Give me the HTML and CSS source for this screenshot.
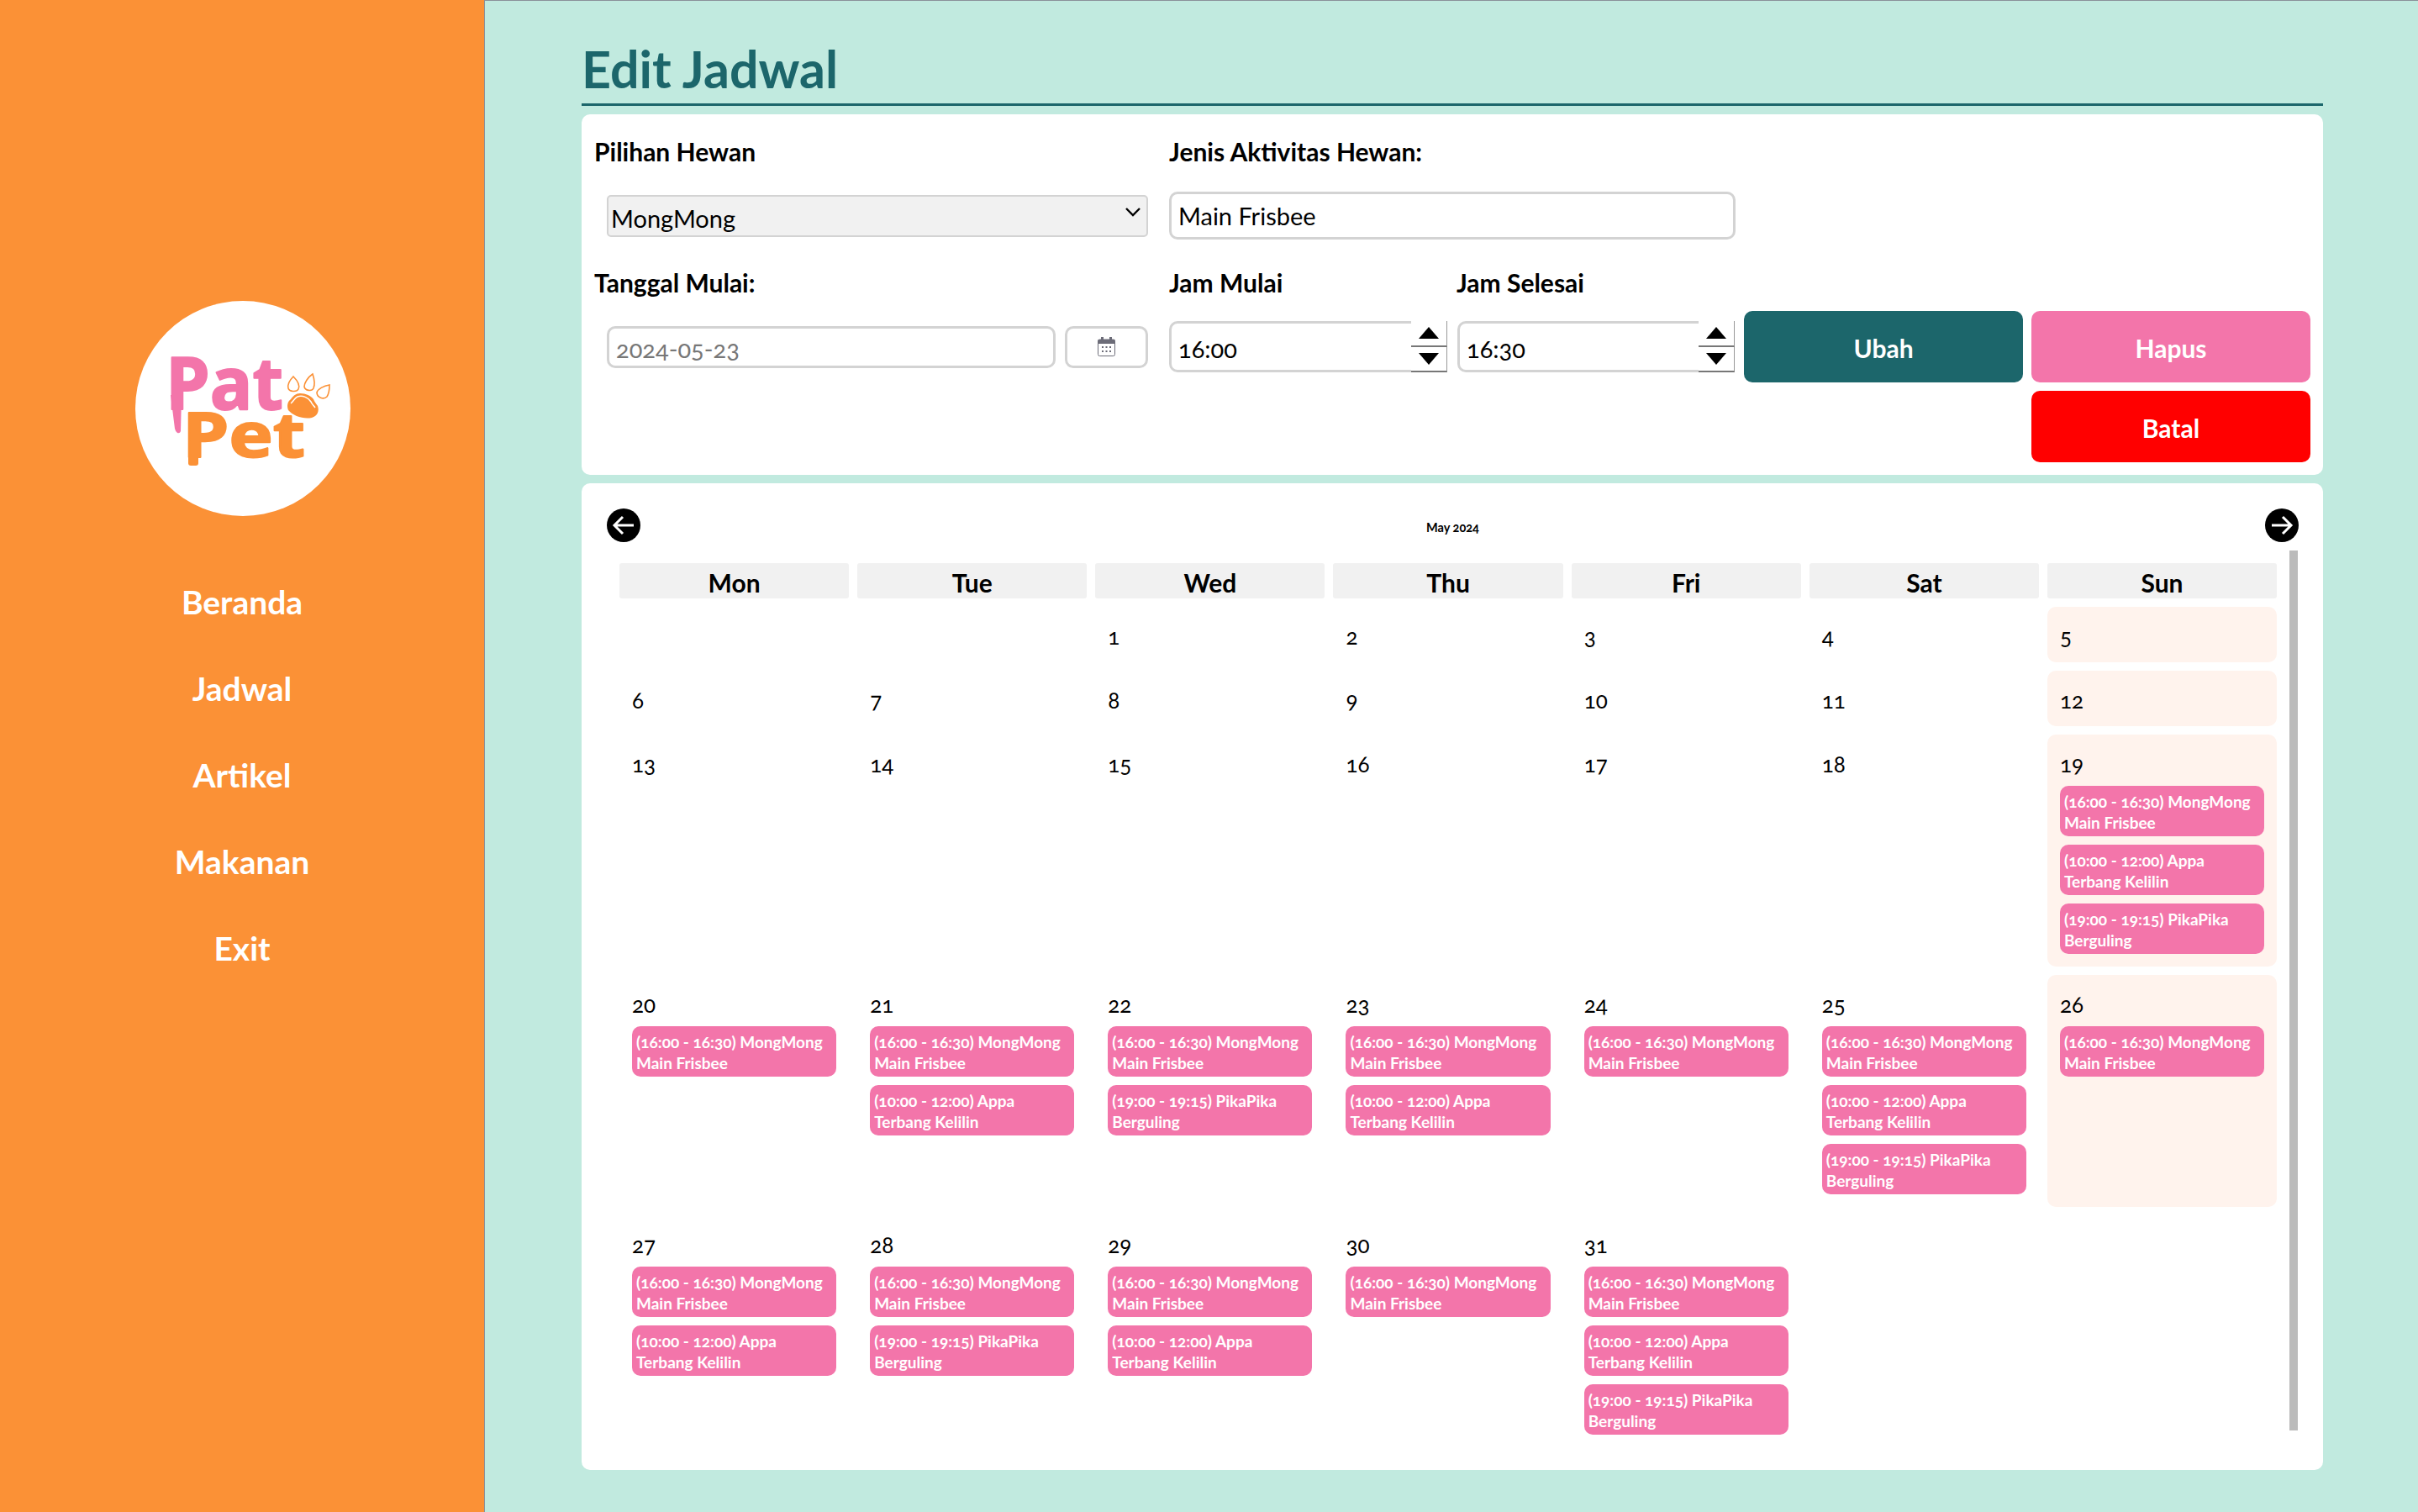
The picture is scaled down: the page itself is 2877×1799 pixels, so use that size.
FILE: index.html
```html
<!DOCTYPE html>
<html lang="en">
<head>
    <meta charset="UTF-8">
    <title>Edit Jadwal</title>
    <link rel="stylesheet" href="styles.css">
</head>
<body>
    <div class="layout">
        <aside class="sidebar">
            <svg class="logo" viewBox="0 0 256 256">
                <circle cx="128" cy="128" r="128" fill="#fff"/>
                <path d="M42 112h13l-1 43q-1 3-4 2-2-1-3-5z" fill="#f375aa"/>
                <text class="logo-text logo-pat" x="36" y="129" textLength="140" lengthAdjust="spacingAndGlyphs">Pat</text>
                <rect x="63" y="170" width="12" height="26" rx="3" fill="#fb9136"/>
                <text class="logo-text logo-pet" x="56" y="186" textLength="146" lengthAdjust="spacingAndGlyphs">Pet</text>
                <g fill="#fff" stroke="#fb9136" stroke-width="1.6">
                    <path d="M188 90c-5 5-7 10-6 14 1 4 10 5 12 1 2-4-1-10-6-15z"/>
                    <path d="M211 87c-6 4-10 11-10 15 1 5 9 6 11 2 2-5 1-11-1-17z"/>
                    <path d="M231 100c-7 1-14 5-15 9 0 6 8 9 12 5 2-3 3-9 3-14z"/>
                </g>
                <path fill="#fb9136" d="M196 110c-5 0-8 3-11 7-4 3-5 8-3 13 6 7 18 11 28 9 7-2 9-8 7-14-2-3-4-5-5-8-3-4-9-7-16-7z"/>
                <path fill="none" stroke="#fff" stroke-width="1.5" d="M185 122c3-2 4-6 8-8 6-2 13 1 16 6 1 3 3 4 5 7"/>
            </svg>
            <nav class="menu">
                <a href="#">Beranda</a>
                <a href="#">Jadwal</a>
                <a href="#">Artikel</a>
                <a href="#">Makanan</a>
                <a href="#">Exit</a>
            </nav>
        </aside>

        <main class="content">
            <h1 class="page-title">Edit Jadwal</h1>

            <form class="card form-card">
                <label class="field-label label-top">Pilihan Hewan</label>
                <label class="field-label label-top">Jenis Aktivitas Hewan:</label>
                <span></span><span></span>

                <div class="field-indent select-wrap">
                    <select class="pet-select">
                        <option>MongMong</option>
                    </select>
                    <svg class="select-arrow" width="20" height="12" viewBox="0 0 20 12">
                        <path d="M2 2l8 8 8-8" fill="none" stroke="#000" stroke-width="2.4"/>
                    </svg>
                </div>
                <input class="text-input activity-input" type="text" value="Main Frisbee">
                <span></span><span></span>

                <label class="field-label label-low">Tanggal Mulai:</label>
                <div class="time-labels">
                    <label class="field-label">Jam Mulai</label>
                    <label class="field-label">Jam Selesai</label>
                </div>
                <span></span><span></span>

                <div class="field-indent date-group">
                    <input class="text-input date-input" type="text" value="2024-05-23" disabled>
                    <button class="date-btn" type="button">
                        <svg width="21" height="23" viewBox="0 0 21 23">
                            <rect x="4" y="0" width="3" height="5" fill="#6c6c78"/>
                            <rect x="14" y="0" width="3" height="5" fill="#6c6c78"/>
                            <rect x="0.5" y="3" width="20" height="19.5" rx="2" fill="#fff" stroke="#6c6c78"/>
                            <rect x="0.5" y="3" width="20" height="5" fill="#6c6c78"/>
                            <g fill="#6c6c78">
                                <rect x="5" y="11" width="2" height="2"/><rect x="9.5" y="11" width="2" height="2"/><rect x="14" y="11" width="2" height="2"/>
                                <rect x="5" y="16" width="2" height="2"/><rect x="9.5" y="16" width="2" height="2"/><rect x="14" y="16" width="2" height="2"/>
                            </g>
                        </svg>
                    </button>
                </div>
                <div class="time-group">
                    <div class="time-box">
                        <input class="time-input" type="text" value="16:00">
                        <div class="spinner">
                            <button type="button" class="spin-btn"><span class="tri-up"></span></button>
                            <button type="button" class="spin-btn"><span class="tri-down"></span></button>
                        </div>
                    </div>
                    <div class="time-box">
                        <input class="time-input" type="text" value="16:30">
                        <div class="spinner">
                            <button type="button" class="spin-btn"><span class="tri-up"></span></button>
                            <button type="button" class="spin-btn"><span class="tri-down"></span></button>
                        </div>
                    </div>
                </div>
                <button class="action-btn btn-ubah" type="button">Ubah</button>
                <button class="action-btn btn-hapus" type="button">Hapus</button>

                <span></span><span></span><span></span>
                <button class="action-btn btn-batal" type="button">Batal</button>
            </form>

            <section class="card calendar-card">
                <div class="cal-nav">
                    <button class="cal-arrow" type="button">
                        <svg width="40" height="40" viewBox="0 0 40 40">
                            <circle cx="20" cy="20" r="20" fill="#000"/>
                            <path d="M32 20H9M19 10L9 20l10 10" fill="none" stroke="#fff" stroke-width="3"/>
                        </svg>
                    </button>
                    <div class="cal-title">May 2024</div>
                    <button class="cal-arrow" type="button">
                        <svg width="40" height="40" viewBox="0 0 40 40">
                            <circle cx="20" cy="20" r="20" fill="#000"/>
                            <path d="M8 20h23M21 10l10 10-10 10" fill="none" stroke="#fff" stroke-width="3"/>
                        </svg>
                    </button>
                </div>

                <div class="cal-scrollbar"></div>

                <div class="cal-grid">
                    <div class="cal-head">Mon</div>
                    <div class="cal-head">Tue</div>
                    <div class="cal-head">Wed</div>
                    <div class="cal-head">Thu</div>
                    <div class="cal-head">Fri</div>
                    <div class="cal-head">Sat</div>
                    <div class="cal-head">Sun</div>

                    <div class="day"></div>
                    <div class="day"></div>
                    <div class="day"><div class="day-num">1</div></div>
                    <div class="day"><div class="day-num">2</div></div>
                    <div class="day"><div class="day-num">3</div></div>
                    <div class="day"><div class="day-num">4</div></div>
                    <div class="day sunday"><div class="day-num">5</div></div>

                    <div class="day"><div class="day-num">6</div></div>
                    <div class="day"><div class="day-num">7</div></div>
                    <div class="day"><div class="day-num">8</div></div>
                    <div class="day"><div class="day-num">9</div></div>
                    <div class="day"><div class="day-num">10</div></div>
                    <div class="day"><div class="day-num">11</div></div>
                    <div class="day sunday"><div class="day-num">12</div></div>

                    <div class="day"><div class="day-num">13</div></div>
                    <div class="day"><div class="day-num">14</div></div>
                    <div class="day"><div class="day-num">15</div></div>
                    <div class="day"><div class="day-num">16</div></div>
                    <div class="day"><div class="day-num">17</div></div>
                    <div class="day"><div class="day-num">18</div></div>
                    <div class="day sunday">
                        <div class="day-num">19</div>
                        <div class="event">(16:00 - 16:30) MongMong<br>Main Frisbee</div>
                        <div class="event">(10:00 - 12:00) Appa<br>Terbang Kelilin</div>
                        <div class="event">(19:00 - 19:15) PikaPika<br>Berguling</div>
                    </div>

                    <div class="day">
                        <div class="day-num">20</div>
                        <div class="event">(16:00 - 16:30) MongMong<br>Main Frisbee</div>
                    </div>
                    <div class="day">
                        <div class="day-num">21</div>
                        <div class="event">(16:00 - 16:30) MongMong<br>Main Frisbee</div>
                        <div class="event">(10:00 - 12:00) Appa<br>Terbang Kelilin</div>
                    </div>
                    <div class="day">
                        <div class="day-num">22</div>
                        <div class="event">(16:00 - 16:30) MongMong<br>Main Frisbee</div>
                        <div class="event">(19:00 - 19:15) PikaPika<br>Berguling</div>
                    </div>
                    <div class="day">
                        <div class="day-num">23</div>
                        <div class="event">(16:00 - 16:30) MongMong<br>Main Frisbee</div>
                        <div class="event">(10:00 - 12:00) Appa<br>Terbang Kelilin</div>
                    </div>
                    <div class="day">
                        <div class="day-num">24</div>
                        <div class="event">(16:00 - 16:30) MongMong<br>Main Frisbee</div>
                    </div>
                    <div class="day">
                        <div class="day-num">25</div>
                        <div class="event">(16:00 - 16:30) MongMong<br>Main Frisbee</div>
                        <div class="event">(10:00 - 12:00) Appa<br>Terbang Kelilin</div>
                        <div class="event">(19:00 - 19:15) PikaPika<br>Berguling</div>
                    </div>
                    <div class="day sunday">
                        <div class="day-num">26</div>
                        <div class="event">(16:00 - 16:30) MongMong<br>Main Frisbee</div>
                    </div>

                    <div class="day">
                        <div class="day-num">27</div>
                        <div class="event">(16:00 - 16:30) MongMong<br>Main Frisbee</div>
                        <div class="event">(10:00 - 12:00) Appa<br>Terbang Kelilin</div>
                    </div>
                    <div class="day">
                        <div class="day-num">28</div>
                        <div class="event">(16:00 - 16:30) MongMong<br>Main Frisbee</div>
                        <div class="event">(19:00 - 19:15) PikaPika<br>Berguling</div>
                    </div>
                    <div class="day">
                        <div class="day-num">29</div>
                        <div class="event">(16:00 - 16:30) MongMong<br>Main Frisbee</div>
                        <div class="event">(10:00 - 12:00) Appa<br>Terbang Kelilin</div>
                    </div>
                    <div class="day">
                        <div class="day-num">30</div>
                        <div class="event">(16:00 - 16:30) MongMong<br>Main Frisbee</div>
                    </div>
                    <div class="day">
                        <div class="day-num">31</div>
                        <div class="event">(16:00 - 16:30) MongMong<br>Main Frisbee</div>
                        <div class="event">(10:00 - 12:00) Appa<br>Terbang Kelilin</div>
                        <div class="event">(19:00 - 19:15) PikaPika<br>Berguling</div>
                    </div>
                    <div class="day"></div>
                    <div class="day"></div>
                </div>
            </section>
        </main>
    </div>
</body>
</html>
```

FILE: styles.css
```css
* {
    box-sizing: border-box;
}

body {
    margin: 0;
    font-family: Lato, "Open Sans", sans-serif;
    font-variant-numeric: oldstyle-nums;
    color: #000;
    background-color: #c1eadf;
}

.layout {
    display: flex;
    height: 1799px;
    overflow: hidden;
}

/* sidebar */
.sidebar {
    width: 577px;
    flex-shrink: 0;
    padding-top: 358px;
    background-color: #fb9136;
    border-right: 1px solid #8a9099;
}

.logo {
    display: block;
    width: 256px;
    height: 256px;
    margin: 0 0 0 161px;
}

.logo-text {
    font-family: "Open Sans", sans-serif;
    font-weight: 700;
    stroke-linejoin: round;
    stroke-width: 2px;
}

.logo-pat {
    font-size: 86px;
    fill: #f375aa;
    stroke: #f375aa;
}

.logo-pet {
    font-size: 74px;
    fill: #fb9136;
    stroke: #fb9136;
}

.menu {
    margin-top: 51px;
}

.menu a {
    display: block;
    height: 103px;
    line-height: 103px;
    text-align: center;
    font-size: 39px;
    font-weight: 700;
    color: #fff;
    text-decoration: none;
}

/* main area */
.content {
    flex: 1;
    padding: 0 113px 0 115px;
    border-top: 1px solid #8a9099;
}

.page-title {
    margin: 0 0 10px;
    height: 125px;
    padding: 46px 0 0;
    font-size: 61px;
    line-height: 70px;
    font-weight: 700;
    color: #1c666b;
    border-bottom: 3px solid #1c666b;
}

.card {
    background-color: #fff;
    border-radius: 10px;
}

/* form */
.form-card {
    display: grid;
    grid-template-columns: 674px 674px 332px 332px;
    grid-template-rows: 62px 87px 70px 85px 95px;
    column-gap: 10px;
    height: 429px;
    padding: 15px;
}

.field-label {
    align-self: center;
    font-size: 30px;
    font-weight: 700;
}

.label-top {
    padding-bottom: 4px;
}

.label-low {
    padding-top: 1px;
}

.time-labels {
    display: flex;
    align-self: center;
    padding-top: 1px;
}

.time-labels .field-label {
    flex: none;
    width: 342px;
}

.field-indent {
    align-self: center;
    padding: 0 15px;
}

.select-wrap {
    position: relative;
}

.select-arrow {
    position: absolute;
    top: 14px;
    right: 23px;
    pointer-events: none;
}

.pet-select {
    display: block;
    width: 100%;
    height: 50px;
    padding: 6px 0 0 3px;
    font-family: inherit;
    font-variant-numeric: inherit;
    font-size: 29px;
    color: #000;
    background-color: #f1f1f1;
    border: 2px solid #d3d3d3;
    border-radius: 5px;
    appearance: none;
}

.text-input {
    display: block;
    font-family: inherit;
    font-variant-numeric: inherit;
    font-size: 29px;
    color: #000;
    background-color: #fff;
    border: 3px solid #d3d3d3;
    border-radius: 10px;
    outline: none;
}

.activity-input {
    align-self: center;
    width: 100%;
    height: 57px;
    padding: 0 8px;
    margin-top: -1px;
}

.date-group {
    display: flex;
    gap: 11px;
}

.date-input {
    flex: 1;
    min-width: 0;
    height: 50px;
    padding: 3px 8px 0;
    color: #777;
}

.date-btn {
    display: flex;
    align-items: center;
    justify-content: center;
    width: 99px;
    height: 50px;
    padding: 0;
    background-color: #fff;
    border: 3px solid #d3d3d3;
    border-radius: 10px;
}

.time-group {
    display: flex;
    align-self: center;
    gap: 12px;
}

.time-box {
    display: flex;
    height: 61px;
    background-color: #fff;
    border: 3px solid #d3d3d3;
    border-radius: 10px;
}

.time-box:first-child {
    width: 331px;
}

.time-box:last-child {
    width: 330px;
}

.time-input {
    flex: 1;
    min-width: 0;
    padding: 3px 8px 0;
    font-family: inherit;
    font-variant-numeric: inherit;
    font-size: 29px;
    border: none;
    border-radius: 10px;
    outline: none;
}

.spinner {
    display: flex;
    flex-direction: column;
    width: 43px;
    margin: -3px -3px -3px 0;
    height: 61px;
}

.spin-btn {
    display: flex;
    flex: 1;
    align-items: center;
    justify-content: center;
    padding: 0;
    background-color: #fff;
    border: none;
    border-bottom: 2px solid #777;
    border-right: 1px solid #999;
}

.tri-up {
    border-left: 12px solid transparent;
    border-right: 12px solid transparent;
    border-bottom: 14px solid #000;
}

.tri-down {
    border-left: 12px solid transparent;
    border-right: 12px solid transparent;
    border-top: 14px solid #000;
}

.action-btn {
    height: 85px;
    padding: 2px 0 0;
    font-family: inherit;
    font-size: 30px;
    font-weight: 700;
    color: #fff;
    border: none;
    border-radius: 10px;
    align-self: end;
}

.btn-ubah {
    background-color: #1c666b;
}

.btn-hapus {
    background-color: #f375aa;
}

.btn-batal {
    background-color: #ff0000;
}

/* calendar */
.calendar-card {
    position: relative;
    height: 1174px;
    margin-top: 10px;
    padding: 30px 29px 0 30px;
}

.cal-nav {
    display: flex;
    align-items: center;
    justify-content: space-between;
    height: 40px;
    margin-bottom: 25px;
}

.cal-arrow {
    display: block;
    width: 40px;
    height: 40px;
    padding: 0;
    background: none;
    border: none;
}

.cal-arrow svg {
    display: block;
}

.cal-title {
    padding-top: 4px;
    font-size: 14.5px;
    font-weight: 700;
}

.cal-scrollbar {
    position: absolute;
    top: 80px;
    right: 30px;
    width: 10px;
    height: 1047px;
    background-color: #bbb;
}

.cal-grid {
    display: grid;
    grid-template-columns: repeat(7, 273.17px);
    gap: 10px;
    margin-left: 15px;
}

.cal-head {
    height: 42px;
    padding-top: 5px;
    text-align: center;
    font-size: 30px;
    line-height: 36px;
    font-weight: 700;
    background-color: #f1f1f1;
    border-radius: 3px;
}

.day {
    min-height: 66px;
    padding: 15px;
    border-radius: 10px;
}

.sunday {
    background-color: #fff3ed;
}

.day-num {
    height: 36px;
    padding-top: 2px;
    font-size: 26px;
    line-height: 36px;
}

.event {
    height: 60px;
    margin-top: 10px;
    padding: 6px 5px 4px;
    font-size: 19px;
    line-height: 25px;
    font-weight: 700;
    white-space: nowrap;
    color: #fff;
    background-color: #f375aa;
    border-radius: 10px;
}
```
